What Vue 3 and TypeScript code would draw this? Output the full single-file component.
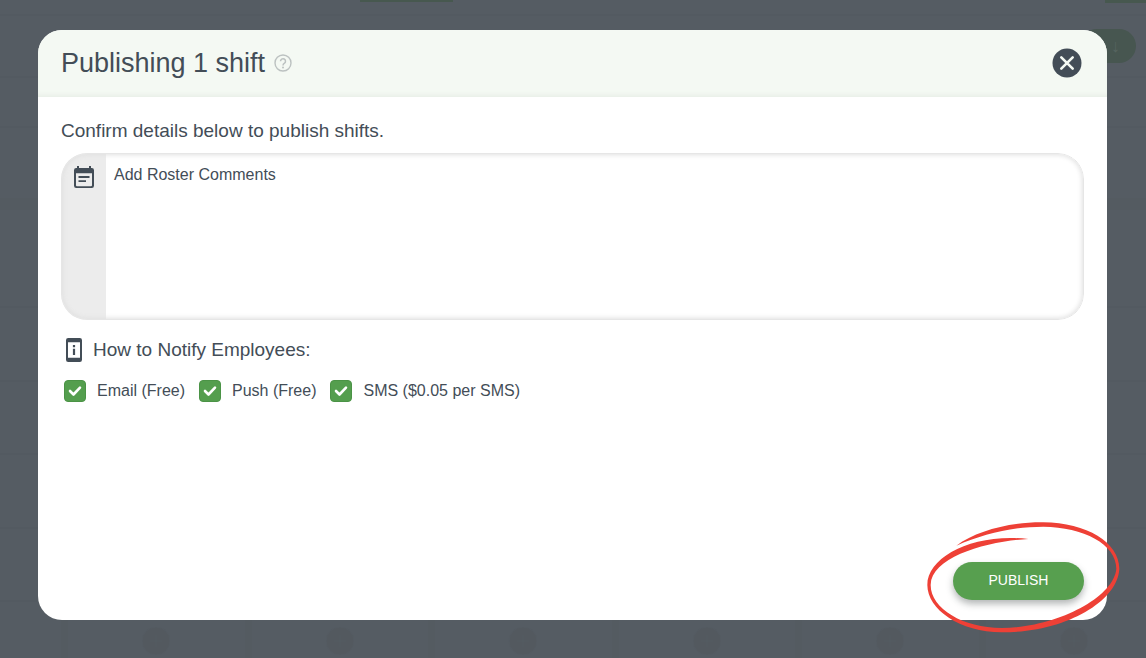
<script setup lang="ts">
import { ref } from 'vue'

interface Channel {
  id: string
  label: string
  enabled: boolean
}

const comments = ref('')
const channels = ref<Channel[]>([
  { id: 'email', label: 'Email (Free)', enabled: true },
  { id: 'push', label: 'Push (Free)', enabled: true },
  { id: 'sms', label: 'SMS ($0.05 per SMS)', enabled: true },
])
</script>

<template>
  <div class="page">
    <div class="roster" aria-hidden="true">
      <div class="toolbar"><span class="tab"></span><span class="tab tab-end"></span></div>
      <div class="toolbar pills"><span class="pill">↓</span></div>
      <div class="toolbar"></div>
      <div class="band"></div>
      <div class="rows">
        <div v-for="n in 5" :key="n" class="row"></div>
      </div>
      <div class="columns">
        <div v-for="n in 6" :key="n" class="column">
          <svg viewBox="0 0 32 32"><circle cx="16" cy="16" r="14" /><path d="M16 10v12M10 16h12" /></svg>
        </div>
      </div>
    </div>

    <main class="dialog" role="dialog" aria-modal="true" aria-labelledby="dialog-title">
      <header class="header">
        <h1 id="dialog-title">Publishing 1 shift</h1>
        <button class="icon-button help" type="button" aria-label="Help">
          <svg viewBox="0 0 18 18" fill="none" stroke="currentColor">
            <circle cx="9" cy="9" r="8" stroke-width="1.4" />
            <path d="M6.500 7.200a2.500 2.500 0 1 1 4 2C9.500 9.900 9 10.300 9 11.400" stroke-width="1.500" />
            <circle cx="9" cy="13.400" r="1" fill="currentColor" stroke="none" />
          </svg>
        </button>
        <button class="icon-button close" type="button" aria-label="Close">
          <svg viewBox="0 0 30 30">
            <circle cx="15" cy="15" r="14.500" fill="#434d57" />
            <path
              d="M9.300 9.300l11.400 11.400M20.700 9.300l-11.400 11.400"
              stroke="#f4f9f3"
              stroke-width="2.600"
              stroke-linecap="round"
            />
          </svg>
        </button>
      </header>

      <form class="content" @submit.prevent>
        <p class="intro">Confirm details below to publish shifts.</p>

        <div class="comments">
          <label class="comments-icon" for="comments" aria-label="Roster comments">
            <svg viewBox="0 0 20 22">
              <path
                fill="currentColor"
                fill-rule="evenodd"
                d="M3 0h2v2h10V0h2v2h.8A2.200 2.200 0 0 1 20 4.200v15.600a2.200 2.200 0 0 1-2.200 2.200H2.200A2.200 2.200 0 0 1 0 19.800V4.200A2.200 2.200 0 0 1 2.200 2H3zM2 7.200v12a1 1 0 0 0 1 1h14a1 1 0 0 0 1-1v-12z"
              />
              <path d="M4.500 11h11M4.500 15.200h7.500" stroke="currentColor" stroke-width="1.800" />
            </svg>
          </label>
          <textarea id="comments" v-model="comments" placeholder="Add Roster Comments"></textarea>
        </div>

        <fieldset class="notify">
          <legend>
            <svg viewBox="0 0 16 24">
              <path
                fill="currentColor"
                fill-rule="evenodd"
                d="M2.200 0h11.600A2.200 2.200 0 0 1 16 2.200v19.600a2.200 2.200 0 0 1-2.200 2.200H2.200A2.200 2.200 0 0 1 0 21.800V2.200A2.200 2.200 0 0 1 2.200 0zM2 4.200v15.600h12V4.200z"
              />
              <path d="M8 7v2.200M8 10.800v6.200" stroke="currentColor" stroke-width="2.200" />
            </svg>
            How to Notify Employees:
          </legend>
          <div class="options">
            <label v-for="channel in channels" :key="channel.id" class="option" :for="channel.id">
              <span class="check">
                <input :id="channel.id" v-model="channel.enabled" type="checkbox" />
                <svg v-if="channel.enabled" viewBox="0 0 22 22">
                  <path
                    d="M6 11l3.500 3.500 6.500-6.800"
                    fill="none"
                    stroke="#fff"
                    stroke-width="2.600"
                    stroke-linecap="round"
                    stroke-linejoin="round"
                  />
                </svg>
              </span>
              {{ channel.label }}
            </label>
          </div>
        </fieldset>

        <footer class="footer">
          <div class="publish-wrap">
            <button class="publish" type="submit">PUBLISH</button>
            <svg class="marker" viewBox="48 30 588 342" aria-hidden="true">
              <path
                fill="#ee4036"
                d="M139 107C200 62 300 36 400 37C530 38 628 98 628 176C624 272 470 367 275 367C150 367 52 298 52 225C52 140 190 68 355 87C240 93 64 138 62 225C62 296 160 354 275 354C440 352 612 262 619 176C619 102 520 51 400 50C310 50 220 72 139 107Z"
              />
            </svg>
          </div>
        </footer>
      </form>
    </main>
  </div>
</template>

<style>
html,
body {
  background: #555c63;
}
</style>

<style scoped>
* {
  box-sizing: border-box;
}

.page {
  position: relative;
  display: flex;
  min-height: 100vh;
  padding: 30px 39px 38px 38px;
  overflow: hidden;
  background: #555c63;
  color: #434d57;
  font-family: 'Liberation Sans', Arial, sans-serif;
}

.roster {
  position: absolute;
  inset: 0;
  display: flex;
  flex-direction: column;
}

.toolbar {
  display: flex;
  justify-content: flex-end;
  height: 16px;
  border-bottom: 2px solid #535a61;
}

.tab {
  width: 93px;
  height: 2px;
  margin-right: 652px;
  background: #47584f;
}

.tab-end {
  width: 41px;
  height: 3px;
  margin-right: 0;
}

.pills {
  height: 62px;
  padding: 13px 10px 0 0;
}

.pill {
  width: 56px;
  height: 34px;
  padding-right: 16px;
  border-radius: 17px;
  background: #475650;
  color: #56645f;
  font-size: 18px;
  line-height: 34px;
  text-align: right;
}

.toolbar:nth-child(3) {
  height: 50px;
}

.band {
  height: 82px;
  border-bottom: 12px solid #545b61;
}

.rows {
  display: flex;
  flex: 1;
  flex-direction: column;
  padding-top: 25px;
}

.row {
  flex: 1;
  border-bottom: 2px solid #535a61;
}

.columns {
  display: grid;
  grid-template-columns: repeat(6, 1fr);
  height: 56px;
  margin-left: 61px;
  margin-right: -16px;
}

.column {
  display: flex;
  justify-content: center;
  align-items: center;
  padding-top: 22px;
  border-left: 7px solid #545b61;
}

.column svg {
  width: 32px;
  height: 32px;
  fill: #53595f;
  stroke: #555c63;
  stroke-width: 1;
}

.dialog {
  position: relative;
  display: flex;
  flex: 1;
  flex-direction: column;
  border-radius: 24px;
  background: #fff;
}

.header {
  display: flex;
  align-items: center;
  height: 67px;
  padding: 0 25px 2px 23px;
  border-radius: 24px 24px 0 0;
  background: #f4f9f3;
  box-shadow: inset 0 -4px 4px -2px #e8eee7;
}

h1 {
  margin: 0;
  font-size: 27px;
  font-weight: 400;
  line-height: 32px;
}

.icon-button {
  padding: 0;
  border: 0;
  background: none;
  cursor: pointer;
}

.icon-button svg {
  display: block;
  width: 100%;
  height: 100%;
}

.help {
  width: 18px;
  height: 18px;
  margin-left: 9px;
  color: #bcc2c1;
}

.close {
  width: 30px;
  height: 30px;
  margin-left: auto;
}

.content {
  display: flex;
  flex: 1;
  flex-direction: column;
  padding: 23px 23px 20px;
}

.intro {
  margin: 0 0 11px;
  font-size: 19px;
  line-height: 22px;
}

.comments {
  position: relative;
  display: flex;
  height: 167px;
  overflow: hidden;
  border-radius: 26px;
}

.comments::after {
  position: absolute;
  inset: 0;
  border: 1px solid #e6e6e6;
  border-radius: 26px;
  box-shadow: inset 0 0 5px 1px #e0e0e0;
  content: '';
  pointer-events: none;
}

.comments-icon {
  width: 45px;
  padding: 13px 0 0 13px;
  background: #ececec;
}

.comments-icon svg {
  display: block;
  width: 20px;
  height: 22px;
}

textarea {
  flex: 1;
  padding: 12px 20px 12px 8px;
  border: 0;
  outline: 0;
  background: #fff;
  color: #434d57;
  font: 16px/20px 'Liberation Sans', Arial, sans-serif;
  resize: none;
}

textarea::placeholder {
  color: #434d57;
  opacity: 1;
}

.notify {
  min-width: 0;
  margin: 18px 0 0;
  padding: 0;
  border: 0;
}

legend {
  display: flex;
  align-items: center;
  gap: 11px;
  padding: 0 0 0 5px;
  font-size: 19px;
  line-height: 24px;
}

legend svg {
  width: 16px;
  height: 24px;
}

.options {
  display: flex;
  flex-wrap: wrap;
  gap: 14px;
  margin: 18px 0 0 3px;
}

.option {
  display: flex;
  align-items: center;
  gap: 11px;
  font-size: 16px;
  line-height: 22px;
}

.check {
  position: relative;
  width: 22px;
  height: 22px;
}

.check input {
  display: block;
  width: 22px;
  height: 22px;
  margin: 0;
  border: 1px solid #4b9346;
  border-radius: 4px;
  appearance: none;
  background: #fff;
}

.check input:checked {
  background: #549e4e;
}

.check svg {
  position: absolute;
  inset: 0;
  pointer-events: none;
}

.footer {
  display: flex;
  justify-content: flex-end;
  margin-top: auto;
}

.publish-wrap {
  position: relative;
}

.publish {
  display: block;
  width: 131px;
  height: 38px;
  padding: 0 0 2px;
  border: 0;
  border-radius: 19px;
  background: #579f4f;
  box-shadow: 0 4px 7px rgb(40 50 50 / 35%);
  color: #fff;
  font: 14px/20px 'Liberation Sans', Arial, sans-serif;
  cursor: pointer;
}

.marker {
  position: absolute;
  top: -42px;
  left: -27px;
  width: 196px;
  height: 114px;
  pointer-events: none;
}
</style>
